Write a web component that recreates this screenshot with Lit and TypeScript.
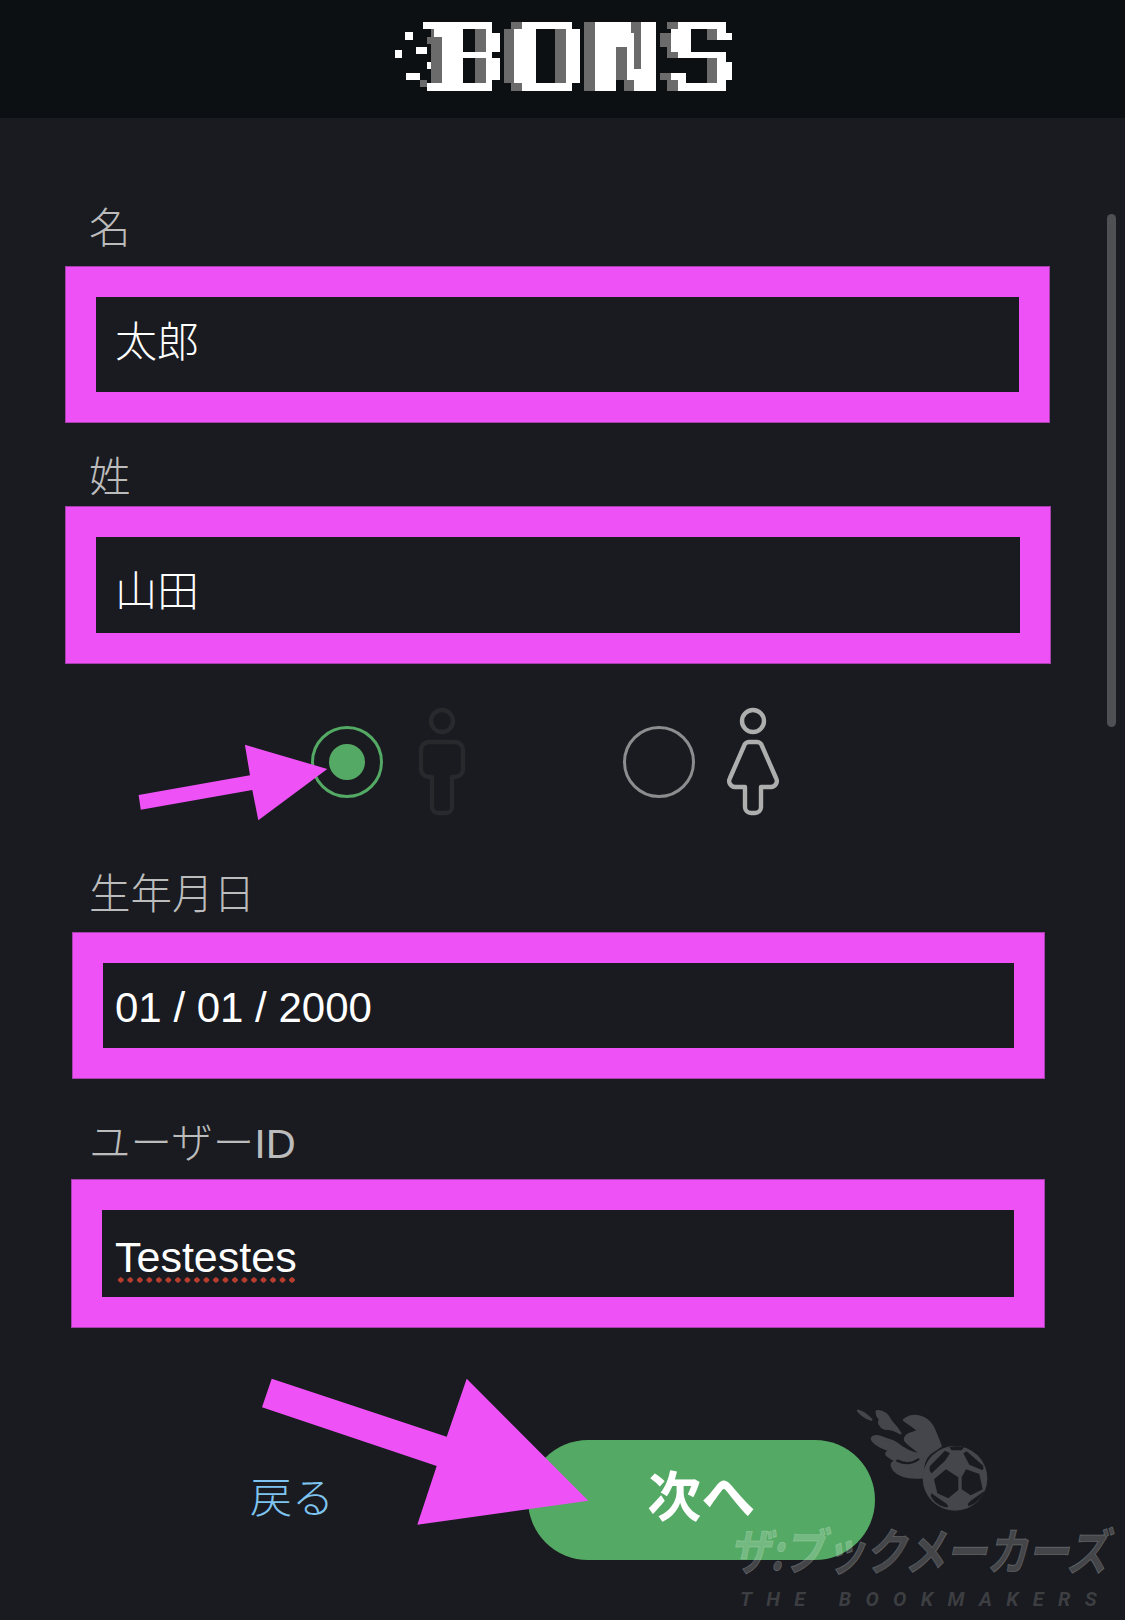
import { LitElement, html, css, svg } from "lit";
import { customElement } from "lit/decorators.js";

const W = "#ffffff";
const G = "#6b6b6b";
// [x, y, w, h, colour] in 3x logo units
const logoRects: [number, number, number, number, string][] = [
  // particles
  [104, 97, 23, 22, W], [136, 141, 33, 22, W], [72, 151, 23, 22, W], [170, 185, 33, 22, W], [106, 218, 42, 22, W], [148, 240, 22, 22, G],
  // B
  [182, 88, 10, 22, G], [170, 110, 44, 22, G], [182, 132, 32, 118, G], [312, 88, 33, 67, G], [312, 175, 33, 75, G],
  [158, 66, 207, 22, W], [190, 88, 88, 22, W], [214, 110, 64, 140, W], [170, 250, 195, 22, W], [345, 88, 20, 67, W], [365, 98, 23, 57, W],
  [278, 155, 87, 20, W], [345, 175, 20, 75, W], [365, 175, 23, 65, W],
  // O
  [420, 66, 33, 22, G], [400, 88, 30, 162, G], [420, 250, 33, 22, G], [553, 88, 32, 162, G],
  [453, 66, 152, 22, W], [430, 88, 65, 162, W], [585, 88, 42, 162, W], [453, 250, 152, 22, W],
  // N
  [640, 66, 32, 206, G], [780, 66, 32, 34, G], [737, 142, 33, 98, G], [790, 100, 22, 108, G], [760, 240, 30, 32, G],
  [672, 66, 108, 34, W], [812, 66, 44, 206, W], [672, 100, 65, 172, W], [737, 100, 53, 42, W], [770, 142, 20, 66, W], [770, 208, 42, 32, W], [790, 240, 22, 32, W],
  // S
  [890, 66, 32, 22, G], [868, 98, 32, 44, G], [890, 142, 32, 33, G], [1010, 88, 30, 32, G], [1010, 175, 30, 75, G], [868, 218, 32, 22, G], [890, 240, 32, 32, G],
  [922, 66, 143, 22, W], [900, 88, 62, 67, W], [1040, 88, 25, 32, W], [1065, 98, 20, 22, W], [922, 155, 143, 20, W], [1040, 175, 25, 75, W], [1065, 185, 20, 55, W],
  [900, 218, 45, 22, W], [922, 240, 23, 10, W], [922, 250, 143, 22, W],
];

@customElement("app-root")
export class AppRoot extends LitElement {
  static styles = css`
    :host {
      display: block;
      position: relative;
      width: 1125px;
      height: 1620px;
      overflow: hidden;
      background: #191b20;
      font-family: "Liberation Sans", "Noto Sans CJK JP", sans-serif;
    }
    .header {
      height: 118px;
      background: #0d1012;
      display: flex;
      justify-content: center;
    }
    .main {
      display: flex;
      flex-direction: column;
      padding-top: 84px;
    }
    .label {
      height: 50px;
      line-height: 54px;
      padding-left: 89px;
      font-size: 41.5px;
      font-weight: 300;
      color: #bcbcbc;
    }
    .box {
      box-sizing: border-box;
      border: 31px solid #ee52f6;
      background: #191b20;
      display: flex;
      align-items: center;
      padding-left: 19px;
      font-size: 42px;
      font-weight: 300;
      color: #ffffff;
      outline: 1px solid #a640ac;
      outline-offset: -1px;
    }
    .val { position: relative; }
    .f1 .label { margin-bottom: 14px; }
    .f1 .box { margin-left: 65px; width: 985px; height: 157px; }
    .f1 .val { top: -6px; }
    .f2 { margin-top: 28px; }
    .f2 .label { margin-bottom: 5px; }
    .f2 .box { margin-left: 65px; width: 986px; height: 158px; }
    .f2 .val { top: 2px; }
    .f3 { margin-top: 51px; }
    .f3 .label { margin-bottom: 14px; }
    .f3 .box { margin-left: 72px; width: 973px; height: 147px; padding-left: 12px; }
    .f3 .val { top: 2px; }
    .f4 { margin-top: 38px; }
    .f4 .label { margin-bottom: 12px; }
    .f4 .box { margin-left: 71px; width: 974px; height: 149px; padding-left: 13px; font-size: 43px; }
    .spell {
      display: inline-block;
      position: relative;
      top: 4px;
      line-height: 48px;
      padding-bottom: 2px;
    }
    .spell::after {
      content: "";
      position: absolute;
      left: 1px;
      right: 0;
      bottom: 0;
      height: 6px;
      background-image: radial-gradient(circle at center, #b83d2e 2.4px, transparent 2.9px);
      background-size: 9.53px 6px;
      background-repeat: repeat-x;
    }
    .radios {
      margin-top: 43px;
      padding-left: 310.5px;
      display: flex;
      height: 110px;
    }
    .option {
      width: 312px;
      display: flex;
      align-items: center;
      gap: 29px;
    }
    .radio {
      box-sizing: border-box;
      width: 72px;
      height: 72px;
      border-radius: 50%;
      border: 3px solid #8d8d8f;
      display: flex;
      align-items: center;
      justify-content: center;
    }
    .radio.on { border-color: #54a964; }
    .dot { width: 36px; height: 36px; border-radius: 50%; background: #54a964; }
    .fig { width: 60px; height: 110px; fill: none; stroke-width: 4.4; stroke-linejoin: round; }
    .fig.off { stroke: #27292c; }
    .fig.lit { stroke: #aeaeae; margin-left: -1px; }
    .actions {
      margin-top: 112px;
      display: flex;
      align-items: center;
      padding-left: 250px;
    }
    .back {
      width: 277.5px;
      font-size: 42px;
      font-weight: 300;
      color: #7fc4f0;
      position: relative;
      top: -6px;
    }
    .next {
      width: 347.5px;
      height: 120px;
      border-radius: 60px;
      background: #54a964;
      color: #ffffff;
      font-size: 54px;
      font-weight: 700;
      line-height: 116px;
      display: flex;
      justify-content: center;
    }
    .scroll {
      position: absolute;
      left: 1107px;
      top: 214px;
      width: 9px;
      height: 513px;
      border-radius: 5px;
      background: #4f5054;
    }
    .arrows {
      position: absolute;
      left: 0;
      top: 0;
      width: 1125px;
      height: 1620px;
      fill: #ee52f6;
      pointer-events: none;
    }
    .mark {
      position: absolute;
      left: 700px;
      top: 1390px;
      width: 425px;
      height: 230px;
      color: #ffffff;
    }
    .ball { position: absolute; left: 0; top: 0; width: 425px; height: 230px; }
    .flames { fill: #45464b; stroke: #45464b; stroke-width: 7; stroke-linejoin: round; }
    .ball-body { fill: #45464b; }
    .curl { fill: none; stroke: #191b20; stroke-width: 7; stroke-linecap: round; }
    .cuts { fill: #191b20; }
    .kana {
      position: absolute;
      left: 29px;
      top: 128px;
      font-size: 41.5px;
      line-height: 60px;
      font-weight: 700;
      font-style: italic;
      letter-spacing: -0.5px;
      white-space: nowrap;
      transform: scaleY(1.2);
      color: rgba(255, 255, 255, 0.2);
      -webkit-text-stroke: 0.8px rgba(255, 255, 255, 0.2);
      font-family: "Noto Sans CJK JP", sans-serif;
    }
    .en {
      position: absolute;
      left: 40px;
      top: 197px;
      font-family: Roboto, sans-serif;
      font-size: 20px;
      line-height: 24px;
      font-weight: 700;
      font-style: italic;
      letter-spacing: 14.3px;
      white-space: pre;
      color: rgba(255, 255, 255, 0.16);
    }
  `;

  render() {
    return html`
      <div class="header">
        <svg width="340" height="118" viewBox="67.5 0 1020 354" shape-rendering="crispEdges">
          ${logoRects.map(([x, y, w, h, c]) => svg`<rect x=${x} y=${y} width=${w} height=${h} fill=${c}></rect>`)}
        </svg>
      </div>
      <div class="main">
        <div class="f1">
          <div class="label">名</div>
          <div class="box"><span class="val">太郎</span></div>
        </div>
        <div class="f2">
          <div class="label">姓</div>
          <div class="box"><span class="val">山田</span></div>
        </div>
        <div class="radios">
          <div class="option">
            <div class="radio on"><div class="dot"></div></div>
            <svg class="fig off" viewBox="0 0 60 110">
              <circle cx="30" cy="14" r="11"></circle>
              <path d="M17 35H43a8 8 0 0 1 8 8V62a8 8 0 0 1-8 8H40V100a6 6 0 0 1-6 6H26a6 6 0 0 1-6-6V70H17a8 8 0 0 1-8-8V43a8 8 0 0 1 8-8Z"></path>
            </svg>
          </div>
          <div class="option">
            <div class="radio"></div>
            <svg class="fig lit" viewBox="0 0 60 110">
              <circle cx="30" cy="14" r="11"></circle>
              <path d="M26 35H34a5 5 0 0 1 5 4L53 71a6 6 0 0 1-5 9H38V100a6 6 0 0 1-6 6H28a6 6 0 0 1-6-6V80H12a6 6 0 0 1-5-9L21 39a5 5 0 0 1 5-4Z"></path>
            </svg>
          </div>
        </div>
        <div class="f3">
          <div class="label">生年月日</div>
          <div class="box"><span class="val">01 / 01 / 2000</span></div>
        </div>
        <div class="f4">
          <div class="label">ユーザーID</div>
          <div class="box"><span class="spell">Testestes</span></div>
        </div>
        <div class="actions">
          <div class="back">戻る</div>
          <div class="next">次へ</div>
        </div>
      </div>
      <div class="scroll"></div>
      <svg class="arrows" viewBox="0 0 1125 1620">
        <polygon points="138.6,795 250,775.3 244.9,744.7 327.3,769 258.3,820.3 252.3,790 140.8,809.7"></polygon>
        <polygon points="271.7,1378.7 446.7,1436.7 466.7,1378.7 588.3,1500.7 417.3,1524.7 436.7,1466 262,1407.3"></polygon>
      </svg>
      <div class="mark">
        <svg class="ball" viewBox="0 0 1275 690">
          <g class="flames">
            <path d="M474 62C490 66 503 78 514 89C500 85 485 75 474 62Z"></path>
            <path d="M530 64C548 62 563 74 573 94C588 110 596 122 601 130C585 120 570 116 554 116C540 110 532 96 542 88C532 82 530 72 530 64Z"></path>
            <path d="M612 90C640 68 680 78 698 110C708 130 715 150 722 168L690 190C672 205 668 225 668 262C640 264 600 262 582 240C570 222 575 215 590 215C580 205 570 205 560 195C555 185 570 180 585 188C565 180 530 170 518 152C510 140 525 135 545 142C560 150 575 148 590 160C610 178 640 190 665 195C650 178 625 165 615 150C615 130 640 130 655 122C640 108 625 100 612 90Z"></path>
          </g>
          <circle class="ball-body" cx="765" cy="265" r="97"></circle>
          <path class="curl" d="M592 212C612 222 635 222 655 208"></path>
          <g class="cuts">
            <path d="M748 172C762 168 775 168 792 172L785 181H755Z"></path>
            <path d="M735 182L690 228C687 238 689 246 695 250L735 212L750 190Z"></path>
            <path d="M800 184L848 226C852 236 850 240 846 240L808 224L790 190Z"></path>
            <path d="M738 238L775 262V300L745 325L712 310L702 268Z"></path>
            <path d="M798 238L838 252L848 298L812 316L785 298V262Z"></path>
            <path d="M694 310L735 338C745 345 748 352 740 352C720 350 700 335 692 318Z"></path>
            <path d="M855 302C845 325 825 342 806 348C800 345 805 338 815 330Z"></path>
          </g>
        </svg>
        <div class="kana">ザ:ブックメーカーズ</div>
        <div class="en">THE BOOKMAKERS</div>
      </div>
    `;
  }
}
